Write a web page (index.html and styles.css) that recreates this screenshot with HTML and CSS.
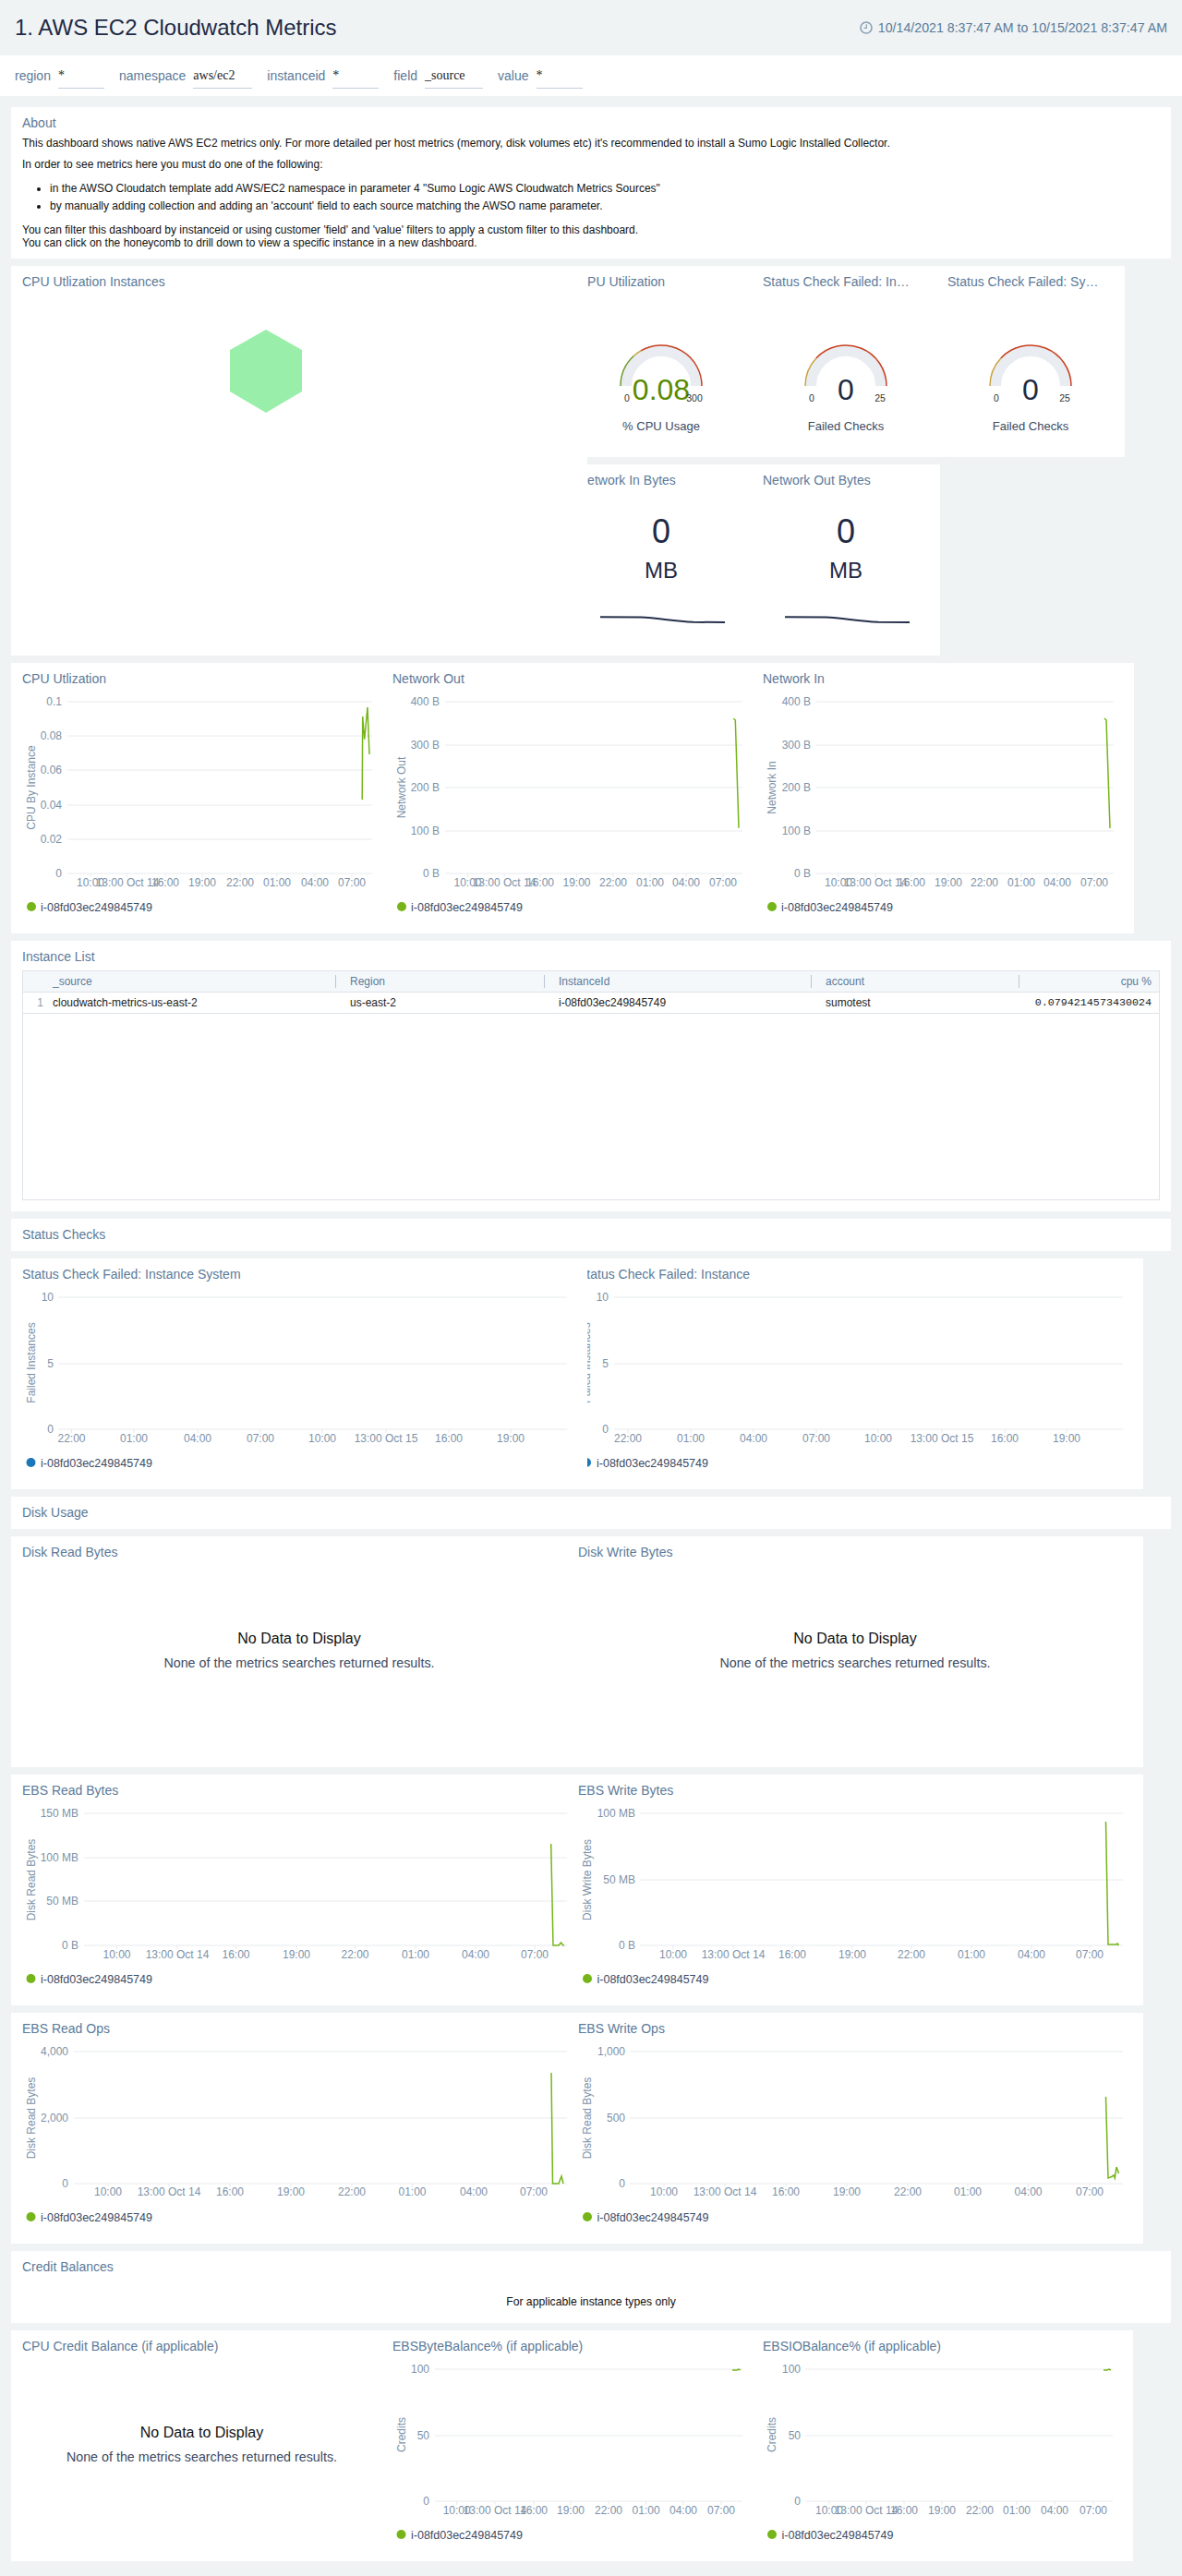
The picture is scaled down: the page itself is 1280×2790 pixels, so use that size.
FILE: index.html
```html
<!DOCTYPE html>
<html lang="en">
<head>
    <meta charset="UTF-8">
    <title>1. AWS EC2 Cloudwatch Metrics</title>
    <link rel="stylesheet" href="styles.css">
</head>
<body>
    <header class="page-header">
        <h1>1. AWS EC2 Cloudwatch Metrics</h1>
        <div class="time-range">
            <svg class="clock" width="14" height="14" viewBox="0 0 14 14">
                <circle cx="7" cy="7" r="6" fill="none" stroke="#8ba0b5" stroke-width="1.6"/>
                <path d="M7.3 3.2V7.4H4.6" fill="none" stroke="#8ba0b5" stroke-width="1.2"/>
            </svg>
            <span>10/14/2021 8:37:47 AM to 10/15/2021 8:37:47 AM</span>
        </div>
    </header>

    <div class="filters">
        <div class="filter"><span class="filter-label">region</span><span class="filter-value w50">*</span></div>
        <div class="filter"><span class="filter-label">namespace</span><span class="filter-value w64">aws/ec2</span></div>
        <div class="filter"><span class="filter-label">instanceid</span><span class="filter-value w50">*</span></div>
        <div class="filter"><span class="filter-label">field</span><span class="filter-value w63">_source</span></div>
        <div class="filter"><span class="filter-label">value</span><span class="filter-value w50">*</span></div>
    </div>

    <main class="dashboard">
        <section class="panel full about">
            <h2 class="title">About</h2>
            <div class="about-body">
                <p>This dashboard shows native AWS EC2 metrics only. For more detailed per host metrics (memory, disk volumes etc) it's recommended to install a Sumo Logic Installed Collector.</p>
                <p>In order to see metrics here you must do one of the following:</p>
                <ul>
                    <li>in the AWSO Cloudatch template add AWS/EC2 namespace in parameter 4 "Sumo Logic AWS Cloudwatch Metrics Sources"</li>
                    <li>by manually adding collection and adding an 'account' field to each source matching the AWSO name parameter.</li>
                </ul>
                <p>You can filter this dashboard by instanceid or using customer 'field' and 'value' filters to apply a custom filter to this dashboard.<br>You can click on the honeycomb to drill down to view a specific instance in a new dashboard.</p>
            </div>
        </section>

        <div class="top-block">
            <section class="panel honeycomb over">
                <h2 class="title">CPU Utlization Instances</h2>
                <svg class="hex" width="78" height="90" viewBox="0 0 78 90">
                    <polygon points="39,0 78,22 78,67 39,90 0,67 0,22" fill="#99efaa"/>
                </svg>
            </section>

            <div class="top-right">
                <section class="panel gauges">
                    <div class="cell">
                        <h2 class="title">CPU Utilization</h2>
                        <svg class="gauge" width="204" height="172" viewBox="0 0 204 172">
                            <path class="band" d="M64 95A38 38 0 0 1 140 95"/>
                            <path class="rim" stroke="#6f9a2a" d="M58 95A44 44 0 0 1 72.6 62.3"/>
                            <path class="rim" stroke="#c9a33f" d="M72.6 62.3A44 44 0 0 1 80 56.9"/>
                            <path class="rim" stroke="#c8401f" d="M80 56.9A44 44 0 0 1 146 95"/>
                            <text class="gauge-value green" x="102" y="99">0.08</text>
                            <text class="gauge-limit" x="65" y="108">0</text>
                            <text class="gauge-limit" x="138" y="108">300</text>
                            <text class="gauge-unit" x="102" y="138">% CPU Usage</text>
                        </svg>
                    </div>
                    <div class="cell">
                        <h2 class="title">Status Check Failed: In…</h2>
                        <svg class="gauge" width="204" height="172" viewBox="0 0 204 172">
                            <path class="band" d="M64 95A38 38 0 0 1 140 95"/>
                            <path class="rim" stroke="#c9a33f" d="M58 95A44 44 0 0 1 69.8 65"/>
                            <path class="rim" stroke="#c8401f" d="M69.8 65A44 44 0 0 1 146 95"/>
                            <text class="gauge-value" x="102" y="99">0</text>
                            <text class="gauge-limit" x="65" y="108">0</text>
                            <text class="gauge-limit" x="139" y="108">25</text>
                            <text class="gauge-unit" x="102" y="138">Failed Checks</text>
                        </svg>
                    </div>
                    <div class="cell">
                        <h2 class="title">Status Check Failed: Sy…</h2>
                        <svg class="gauge" width="204" height="172" viewBox="0 0 204 172">
                            <path class="band" d="M64 95A38 38 0 0 1 140 95"/>
                            <path class="rim" stroke="#c9a33f" d="M58 95A44 44 0 0 1 69.8 65"/>
                            <path class="rim" stroke="#c8401f" d="M69.8 65A44 44 0 0 1 146 95"/>
                            <text class="gauge-value" x="102" y="99">0</text>
                            <text class="gauge-limit" x="65" y="108">0</text>
                            <text class="gauge-limit" x="139" y="108">25</text>
                            <text class="gauge-unit" x="102" y="138">Failed Checks</text>
                        </svg>
                    </div>
                </section>

                <section class="panel bignums">
                    <div class="cell">
                        <h2 class="title">Network In Bytes</h2>
                        <div class="bignum">0</div>
                        <div class="bignum-unit">MB</div>
                        <svg class="spark" width="204" height="20" viewBox="0 0 204 20">
                            <path d="M36 7.3L80 7.6C100 8.5 115 12 137 12.8L171 13"/>
                        </svg>
                    </div>
                    <div class="cell">
                        <h2 class="title">Network Out Bytes</h2>
                        <div class="bignum">0</div>
                        <div class="bignum-unit">MB</div>
                        <svg class="spark" width="204" height="20" viewBox="0 0 204 20">
                            <path d="M36 7.3L80 7.6C100 8.5 115 12 137 12.8L171 13"/>
                        </svg>
                    </div>
                </section>
            </div>
        </div>

        <section class="panel row tall w1216">
            <div class="cell c401"><h2 class="title">CPU Utlization</h2><svg class="chart" id="cpu"></svg></div>
            <div class="cell c401"><h2 class="title">Network Out</h2><svg class="chart" id="net-out"></svg></div>
            <div class="cell grow"><h2 class="title">Network In</h2><svg class="chart" id="net-in"></svg></div>
        </section>

        <section class="panel full instances">
            <h2 class="title">Instance List</h2>
            <div class="table-box">
                <table>
                    <colgroup>
                        <col class="col-num"><col class="col-source"><col class="col-region"><col class="col-instance"><col class="col-account"><col>
                    </colgroup>
                    <thead>
                        <tr>
                            <th></th><th>_source</th><th class="divided">Region</th><th class="divided">InstanceId</th><th class="divided">account</th><th class="divided right">cpu %</th>
                        </tr>
                    </thead>
                    <tbody>
                        <tr>
                            <td class="row-num">1</td><td>cloudwatch-metrics-us-east-2</td><td class="indent">us-east-2</td><td class="indent">i-08fd03ec249845749</td><td class="indent">sumotest</td><td class="num">0.0794214573430024</td>
                        </tr>
                    </tbody>
                </table>
            </div>
        </section>

        <section class="panel full"><h2 class="title">Status Checks</h2></section>

        <section class="panel row w1226">
            <div class="cell c624 over"><h2 class="title">Status Check Failed: Instance System</h2><svg class="chart" id="status-system"></svg></div>
            <div class="cell c624 pull"><h2 class="title">Status Check Failed: Instance</h2><svg class="chart" id="status-instance"></svg></div>
        </section>

        <section class="panel full"><h2 class="title">Disk Usage</h2></section>

        <section class="panel row w1226">
            <div class="cell c602">
                <h2 class="title">Disk Read Bytes</h2>
                <div class="no-data wide">
                    <div class="no-data-head">No Data to Display</div>
                    <div class="no-data-sub">None of the metrics searches returned results.</div>
                </div>
            </div>
            <div class="cell grow">
                <h2 class="title">Disk Write Bytes</h2>
                <div class="no-data">
                    <div class="no-data-head">No Data to Display</div>
                    <div class="no-data-sub">None of the metrics searches returned results.</div>
                </div>
            </div>
        </section>

        <section class="panel row w1226">
            <div class="cell c602"><h2 class="title">EBS Read Bytes</h2><svg class="chart" id="ebs-read-bytes"></svg></div>
            <div class="cell grow"><h2 class="title">EBS Write Bytes</h2><svg class="chart" id="ebs-write-bytes"></svg></div>
        </section>

        <section class="panel row w1226">
            <div class="cell c602"><h2 class="title">EBS Read Ops</h2><svg class="chart" id="ebs-read-ops"></svg></div>
            <div class="cell grow"><h2 class="title">EBS Write Ops</h2><svg class="chart" id="ebs-write-ops"></svg></div>
        </section>

        <section class="panel full credits">
            <h2 class="title">Credit Balances</h2>
            <p class="credits-note">For applicable instance types only</p>
        </section>

        <section class="panel row w1215">
            <div class="cell c401">
                <h2 class="title">CPU Credit Balance (if applicable)</h2>
                <div class="no-data narrow">
                    <div class="no-data-head">No Data to Display</div>
                    <div class="no-data-sub">None of the metrics searches returned results.</div>
                </div>
            </div>
            <div class="cell c401"><h2 class="title">EBSByteBalance% (if applicable)</h2><svg class="chart" id="ebs-byte"></svg></div>
            <div class="cell grow"><h2 class="title">EBSIOBalance% (if applicable)</h2><svg class="chart" id="ebs-io"></svg></div>
        </section>
    </main>

    <script src="charts.js"></script>
</body>
</html>
```

FILE: styles.css
```css
* {
    box-sizing: border-box;
}
body {
    margin: 0;
    background-color: #eff3f4;
    font-family: "Liberation Sans", Arial, sans-serif;
    color: #1f2a44;
}

/* Page header */
.page-header {
    height: 60px;
    padding: 0 16px;
    display: flex;
    justify-content: space-between;
    align-items: center;
}
.page-header h1 {
    margin: 0;
    font-size: 24px;
    font-weight: normal;
}
.time-range {
    display: flex;
    align-items: center;
    gap: 6px;
    font-size: 14.2px;
    color: #5c7a99;
}

/* Filter bar */
.filters {
    height: 44px;
    padding: 11px 0 0 16px;
    background-color: #fff;
    display: flex;
    gap: 16px;
}
.filter {
    display: flex;
    gap: 8px;
}
.filter-label {
    font-size: 14px;
    line-height: 22px;
    color: #5c7a99;
}
.filter-value {
    height: 25px;
    font-family: "Liberation Serif", serif;
    font-size: 14px;
    line-height: 22px;
    color: #222;
    border-bottom: 1px solid #c0cfdd;
}
.w50 { width: 50px; }
.w63 { width: 63px; }
.w64 { width: 64px; }

/* Panels */
.dashboard {
    padding: 12px 0 16px 12px;
    display: flex;
    flex-direction: column;
    gap: 8px;
}
.panel {
    background-color: #fff;
}
.full {
    width: 1256px;
}
.title {
    margin: 0;
    height: 35px;
    padding: 9px 12px 0;
    font-size: 14px;
    font-weight: normal;
    line-height: 16px;
    white-space: nowrap;
    color: #5c7a99;
}
.over {
    position: relative;
    z-index: 1;
    background-color: #fff;
}

/* About */
.about {
    height: 164px;
}
.about-body {
    margin-top: -3px;
    padding: 0 12px;
    font-size: 12px;
    line-height: 14px;
    color: #111;
}
.about-body p {
    margin: 0 0 9px;
}
.about-body ul {
    margin: 12px 0;
    padding-left: 30px;
}
.about-body li {
    margin-bottom: 5px;
}

/* Honeycomb, gauges and big numbers */
.top-block {
    display: flex;
}
.honeycomb {
    width: 624px;
    height: 422px;
}
.hex {
    display: block;
    margin: 34px 0 0 237px;
}
.top-right {
    margin-left: -22px;
    display: flex;
    flex-direction: column;
    gap: 8px;
}
.gauges {
    width: 604px;
    height: 207px;
    display: flex;
}
.bignums {
    width: 404px;
    height: 207px;
    display: flex;
}
.gauges .cell, .bignums .cell {
    width: 200px;
}
.gauge, .spark {
    display: block;
}
.band {
    fill: none;
    stroke: #e9edf1;
    stroke-width: 12;
}
.rim {
    fill: none;
    stroke-width: 1.5;
}
.gauge text {
    text-anchor: middle;
    dominant-baseline: central;
}
.gauge-value {
    font-size: 32px;
    fill: #1f2a44;
}
.gauge-value.green {
    fill: #5a8a00;
}
.gauge-limit {
    font-size: 10.5px;
    fill: #333;
}
.gauge-unit {
    font-size: 13px;
    fill: #3d4a63;
}
.bignum {
    width: 204px;
    margin-top: 18px;
    font-size: 36px;
    line-height: 40px;
    text-align: center;
}
.bignum-unit {
    width: 204px;
    margin-top: 8px;
    font-size: 24px;
    line-height: 28px;
    text-align: center;
}
.spark {
    margin-top: 29px;
}
.spark path {
    fill: none;
    stroke: #25304a;
    stroke-width: 2;
}

/* Rows of charts */
.row {
    height: 250px;
    display: flex;
}
.tall {
    height: 293px;
}
.w1216 { width: 1216px; }
.w1226 { width: 1226px; }
.w1215 { width: 1215px; }
.cell {
    display: flex;
    flex-direction: column;
    min-width: 0;
}
.c401 { width: 401px; }
.c602 { width: 602px; }
.c624 { width: 624px; flex: none; }
.grow { flex: 1; }
.pull { margin-left: -22px; }
.chart {
    display: block;
    flex: 1;
    min-height: 0;
    width: 100%;
}
.chart text {
    font-size: 12px;
    fill: #7d92a8;
    dominant-baseline: central;
}
.chart .y-tick {
    text-anchor: end;
}
.chart .x-tick, .chart .y-title {
    text-anchor: middle;
}
.chart .legend {
    font-size: 12.5px;
    fill: #3d4a63;
}

/* Empty panels */
.no-data {
    margin-top: 66px;
    text-align: center;
}
.no-data.wide {
    margin-right: -22px;
}
.no-data.narrow {
    margin-right: -12px;
}
.no-data-head {
    font-size: 16px;
    line-height: 20px;
    color: #111;
}
.no-data-sub {
    margin-top: 8px;
    font-size: 14.3px;
    line-height: 16px;
    color: #3d4a63;
}

/* Instance table */
.instances {
    height: 293px;
}
.table-box {
    width: 1232px;
    height: 249px;
    margin: -3px 0 0 12px;
    border: 1px solid #dde3e9;
}
table {
    width: 100%;
    table-layout: fixed;
    border-collapse: collapse;
    font-size: 12px;
}
.col-num { width: 26px; }
.col-source { width: 312px; }
.col-region { width: 226px; }
.col-instance { width: 289px; }
.col-account { width: 225px; }
th {
    height: 22px;
    padding: 0 6px;
    font-weight: normal;
    text-align: left;
    color: #5c7a99;
    background-color: #f4f8fb;
    border-bottom: 1px solid #dde3e9;
}
th.divided {
    padding-left: 16px;
    background-image: linear-gradient(#b9c6d3, #b9c6d3);
    background-size: 1px 14px;
    background-position: left center;
    background-repeat: no-repeat;
}
th.right {
    padding-right: 8px;
    text-align: right;
}
td {
    height: 23px;
    padding: 0 6px;
    color: #222;
    border-bottom: 1px solid #dde3e9;
}
td.indent {
    padding-left: 16px;
}
td.row-num {
    padding-right: 4px;
    text-align: right;
    color: #8a9db0;
}
td.num {
    padding-right: 8px;
    text-align: right;
    font-family: "Liberation Mono", monospace;
    font-size: 11.7px;
}

/* Credit balances */
.credits {
    height: 78px;
}
.credits-note {
    margin: 13px 0 0;
    font-size: 12.2px;
    line-height: 14px;
    text-align: center;
    color: #111;
}
```

FILE: charts.js
```js
// Draws the time series panels. All coordinates are page pixels,
// each svg gets a viewBox equal to its own box on the page.
const NS = 'http://www.w3.org/2000/svg';
const GREEN = '#76b51a';
const BLUE = '#1a78b8';
const OCT14 = ['10:00', '13:00 Oct 14', '16:00', '19:00', '22:00', '01:00', '04:00', '07:00'];
const OCT15 = ['22:00', '01:00', '04:00', '07:00', '10:00', '13:00 Oct 15', '16:00', '19:00'];
const INSTANCE = 'i-08fd03ec249845749';

const charts = {
    'cpu': {
        grid: [73, 403], yRight: 67, yTitle: ['CPU By Instance', 33.5, 853],
        yTicks: [['0.1', 760], ['0.08', 797], ['0.06', 834], ['0.04', 872], ['0.02', 909], ['0', 946]],
        xLabels: OCT14, xPos: [98, 138, 179, 219, 260, 300, 341, 381], xY: 956,
        legend: [34, 44, 982], color: GREEN,
        line: [[392.2, 866], [392.7, 776], [394.7, 800.7], [398, 766], [400, 817]]
    },
    'net-out': {
        grid: [482, 804], yRight: 476, yTitle: ['Network Out', 435, 853],
        yTicks: [['400 B', 760], ['300 B', 807], ['200 B', 853], ['100 B', 900], ['0 B', 946]],
        xLabels: OCT14, xPos: [506.5, 546, 585, 624.5, 664, 704, 743, 783], xY: 956,
        legend: [435, 445, 982], color: GREEN,
        line: [[794.3, 778.3], [796.3, 780], [800, 896.7]]
    },
    'net-in': {
        grid: [884, 1206], yRight: 878, yTitle: ['Network In', 836, 853],
        yTicks: [['400 B', 760], ['300 B', 807], ['200 B', 853], ['100 B', 900], ['0 B', 946]],
        xLabels: OCT14, xPos: [908, 948, 987, 1027, 1066, 1106, 1145, 1185], xY: 956,
        legend: [836, 846, 982], color: GREEN,
        line: [[1196, 778], [1198, 780], [1202, 897]]
    },
    'status-system': {
        grid: [63, 614], yRight: 58, yTitle: ['Failed Instances', 33.5, 1476],
        yTicks: [['10', 1405], ['5', 1477], ['0', 1548]],
        xLabels: OCT15, xPos: [77.5, 145, 214, 282, 349, 418, 486, 553], xY: 1558,
        legend: [33.5, 44, 1584], color: BLUE
    },
    'status-instance': {
        grid: [665, 1216], yRight: 659, yTitle: ['Failed Instances', 635, 1476],
        yTicks: [['10', 1405], ['5', 1477], ['0', 1548]],
        xLabels: OCT15, xPos: [680, 748, 816, 884, 951, 1020, 1088, 1155], xY: 1558,
        legend: [635, 646, 1584], color: BLUE
    },
    'ebs-read-bytes': {
        grid: [91, 614], yRight: 85, yTitle: ['Disk Read Bytes', 33.5, 2036],
        yTicks: [['150 MB', 1964], ['100 MB', 2012], ['50 MB', 2059], ['0 B', 2107]],
        xLabels: OCT14, xPos: [126.5, 192, 255.5, 321, 384.5, 450, 515, 579], xY: 2117,
        legend: [33.5, 44, 2143], color: GREEN,
        line: [[596.7, 1997], [599, 2107], [605, 2107], [607.5, 2104], [610, 2107], [611, 2107]]
    },
    'ebs-write-bytes': {
        grid: [693, 1216], yRight: 688, yTitle: ['Disk Write Bytes', 636, 2036],
        yTicks: [['100 MB', 1964], ['50 MB', 2036], ['0 B', 2107]],
        xLabels: OCT14, xPos: [729, 794, 858, 923, 987, 1052, 1117, 1180], xY: 2117,
        legend: [636, 646.5, 2143], color: GREEN,
        line: [[1197.5, 1973], [1200, 2106], [1209, 2106], [1210, 2105], [1211.5, 2107]]
    },
    'ebs-read-ops': {
        grid: [80, 614], yRight: 74, yTitle: ['Disk Read Bytes', 33.5, 2294],
        yTicks: [['4,000', 2222], ['2,000', 2294], ['0', 2365]],
        xLabels: OCT14, xPos: [117, 183, 249, 315, 381, 446.5, 513, 578], xY: 2374,
        legend: [33.5, 44, 2401], color: GREEN,
        line: [[597, 2245], [598.5, 2365], [605, 2365], [608, 2357], [610, 2365]]
    },
    'ebs-write-ops': {
        grid: [682, 1216], yRight: 677, yTitle: ['Disk Read Bytes', 636, 2294],
        yTicks: [['1,000', 2222], ['500', 2294], ['0', 2365]],
        xLabels: OCT14, xPos: [719, 785, 851, 917, 983, 1048, 1113.5, 1180], xY: 2374,
        legend: [636, 646.5, 2401], color: GREEN,
        line: [[1197.5, 2271], [1200, 2359], [1204, 2357.5], [1206, 2355.7], [1207.3, 2359], [1209, 2347], [1211.5, 2354]]
    },
    'ebs-byte': {
        grid: [471, 804], yRight: 465, yTitle: ['Credits', 434.5, 2637],
        yTicks: [['100', 2566], ['50', 2638], ['0', 2709]],
        xLabels: OCT14, xPos: [494.7, 536, 578, 618, 659, 699.6, 740, 781], xY: 2719,
        legend: [434.5, 445, 2745], color: GREEN,
        line: [[793, 2567], [798, 2567], [800, 2566], [801.6, 2567]]
    },
    'ebs-io': {
        grid: [872, 1205], yRight: 867, yTitle: ['Credits', 836, 2637],
        yTicks: [['100', 2566], ['50', 2638], ['0', 2709]],
        xLabels: OCT14, xPos: [898, 938, 979, 1020, 1061, 1101, 1142, 1184], xY: 2719,
        legend: [836, 846.5, 2745], color: GREEN,
        line: [[1195, 2567], [1199, 2567], [1201, 2566], [1203, 2567]]
    }
};

function add(svg, tag, attrs, text) {
    const el = document.createElementNS(NS, tag);
    for (const key in attrs) {
        el.setAttribute(key, attrs[key]);
    }
    if (text) {
        el.textContent = text;
    }
    svg.appendChild(el);
    return el;
}

function drawChart(id, c) {
    const svg = document.getElementById(id);
    const box = svg.getBoundingClientRect();
    svg.setAttribute('viewBox', `${box.left} ${box.top} ${box.width} ${box.height}`);

    c.yTicks.forEach(([label, y]) => {
        add(svg, 'line', { x1: c.grid[0], x2: c.grid[1], y1: y, y2: y, stroke: '#e6eaed' });
        add(svg, 'text', { class: 'y-tick', x: c.yRight, y: y }, label);
    });

    const axisY = c.yTicks[c.yTicks.length - 1][1];
    c.xLabels.forEach((label, i) => {
        const x = c.xPos[i];
        add(svg, 'line', { x1: x, x2: x, y1: axisY, y2: axisY + 4, stroke: '#e6eaed' });
        add(svg, 'text', { class: 'x-tick', x: x, y: c.xY }, label);
    });

    const [title, tx, ty] = c.yTitle;
    add(svg, 'text', { class: 'y-title', x: tx, y: ty, transform: `rotate(-90 ${tx} ${ty})` }, title);

    if (c.line) {
        add(svg, 'polyline', {
            points: c.line.map(p => p.join(',')).join(' '),
            fill: 'none', stroke: c.color, 'stroke-width': 1.5
        });
    }

    const [dotX, textX, legendY] = c.legend;
    add(svg, 'circle', { cx: dotX, cy: legendY, r: 5, fill: c.color });
    add(svg, 'text', { class: 'legend', x: textX, y: legendY + 1 }, INSTANCE);
}

for (const id in charts) {
    drawChart(id, charts[id]);
}
```
